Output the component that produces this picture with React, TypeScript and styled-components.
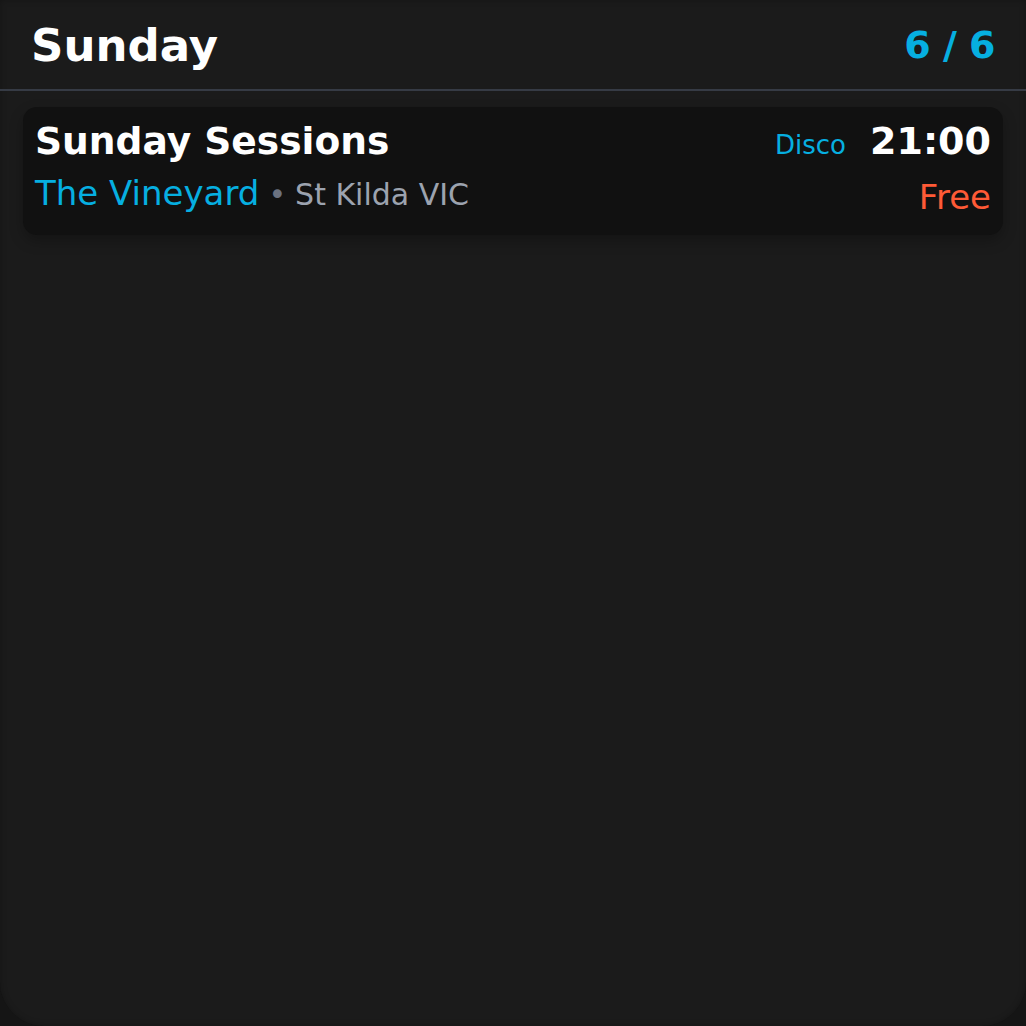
import styled, { createGlobalStyle } from 'styled-components';

const GlobalStyle = createGlobalStyle`
	html, body {
		margin: 0;
		padding: 0;
		background: #151515;
	}
	body {
		font-family: 'DejaVu Sans', Verdana, sans-serif;
	}
`;

const events = [
	{
		title: 'Sunday Sessions',
		venue: 'The Vineyard',
		suburb: 'St Kilda VIC',
		genre: 'Disco',
		time: '21:00',
		price: 'Free',
	},
];

export default function App() {
	return (
		<>
			<GlobalStyle />
			<Panel>
				<Header>
					<DayTitle>Sunday</DayTitle>
					<Counter>6 / 6</Counter>
				</Header>
				<List>
					{events.map((ev) => (
						<Card key={ev.title}>
							<Main>
								<EventTitle>{ev.title}</EventTitle>
								<VenueLine>
									<Venue>{ev.venue}</Venue>
									<Dot>•</Dot>
									<Suburb>{ev.suburb}</Suburb>
								</VenueLine>
							</Main>
							<Side>
								<TimeRow>
									<Genre>{ev.genre}</Genre>
									<Time>{ev.time}</Time>
								</TimeRow>
								<Price>{ev.price}</Price>
							</Side>
						</Card>
					))}
				</List>
			</Panel>
		</>
	);
}

const Panel = styled.div`
	width: 1026px;
	height: 1026px;
	box-sizing: border-box;
	background: #1b1b1b;
	border-radius: 0 0 44px 44px;
	box-shadow: inset 0 0 6px rgba(0, 0, 0, 0.25);
	overflow: hidden;
	display: flex;
	flex-direction: column;
`;

const Header = styled.header`
	height: 91px;
	box-sizing: border-box;
	display: flex;
	align-items: center;
	justify-content: space-between;
	padding: 0 31px 0 31px;
	border-bottom: 2px solid #363b45;
`;

const DayTitle = styled.h1`
	margin: 0;
	font-size: 45px;
	font-weight: 700;
	color: #ffffff;
	line-height: 1;
	padding-top: 2px;
`;

const Counter = styled.span`
	font-size: 38px;
	font-weight: 700;
	color: #06afe1;
	line-height: 1;
	letter-spacing: -0.5px;
`;

const List = styled.div`
	padding: 16px 23px;
	display: flex;
	flex-direction: column;
	gap: 12px;
`;

const Card = styled.div`
	background: #111111;
	border-radius: 14px;
	padding: 12px 12px 17px 12px;
	display: flex;
	justify-content: space-between;
	box-shadow: 0 6px 14px rgba(0, 0, 0, 0.25);
`;

const Main = styled.div`
	display: flex;
	flex-direction: column;
	gap: 9px;
`;

const EventTitle = styled.div`
	font-size: 37.6px;
	font-weight: 700;
	color: #ffffff;
	line-height: 44px;
`;

const VenueLine = styled.div`
	display: flex;
	align-items: baseline;
	gap: 9px;
	line-height: 42px;
`;

const Venue = styled.span`
	font-size: 34px;
	color: #06afe1;
`;

const Dot = styled.span`
	font-size: 30px;
	color: #6b7280;
`;

const Suburb = styled.span`
	font-size: 30px;
	color: #9ca3af;
`;

const Side = styled.div`
	display: flex;
	flex-direction: column;
	align-items: flex-end;
	gap: 9px;
`;

const TimeRow = styled.div`
	display: flex;
	align-items: baseline;
	gap: 24px;
	line-height: 44px;
`;

const Genre = styled.span`
	font-size: 26px;
	color: #06afe1;
`;

const Time = styled.span`
	font-size: 38px;
	font-weight: 700;
	color: #ffffff;
`;

const Price = styled.span`
	font-size: 34px;
	color: #ff5a36;
	line-height: 42px;
`;
